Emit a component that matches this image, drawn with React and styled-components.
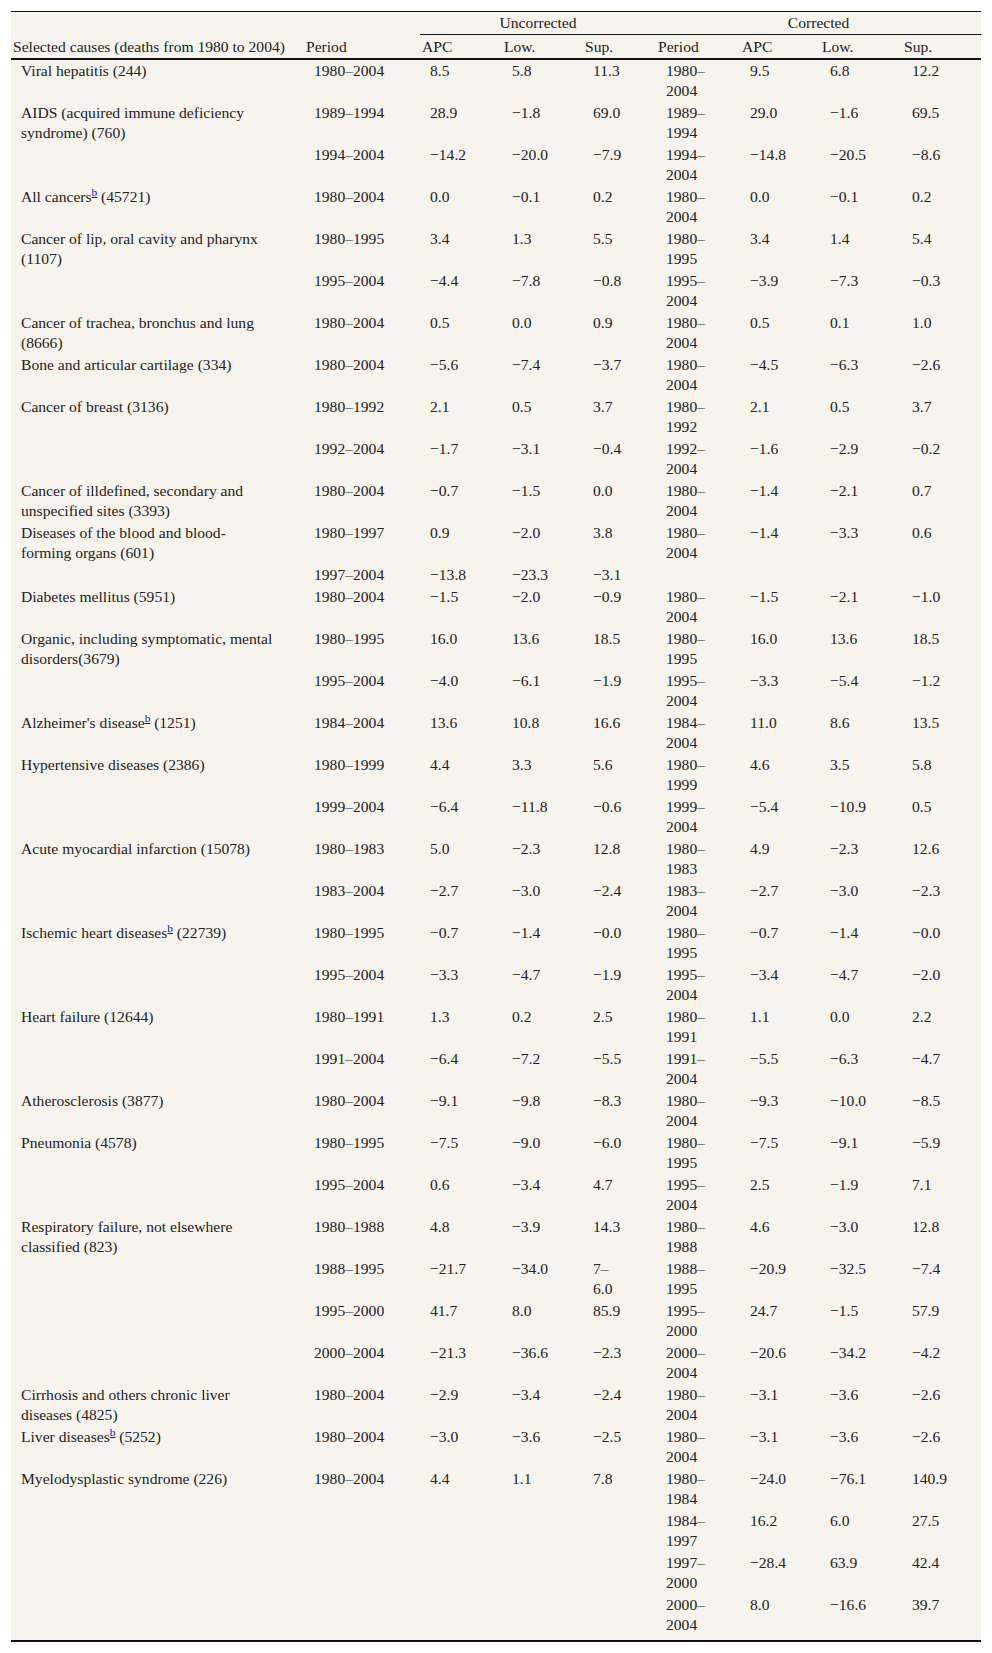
import React from "react";
import styled, { createGlobalStyle } from "styled-components";

const GlobalStyle = createGlobalStyle`
  body {
    margin: 0;
    background: #fff;
    color: #222;
    font-family: "Liberation Serif", "Times New Roman", serif;
  }
`;

const Page = styled.div`
  padding: 11px 11px 0;
`;
const Table = styled.table`
  width: 970px;
  table-layout: fixed;
  border-collapse: separate;
  border-spacing: 0;
  background: #f7f4ee;
  font-size: 15.6px;
  line-height: 20px;
  border-top: 1px solid #111;
  border-bottom: 2px solid #111;
`;
const Head = styled.th`
  padding: 2px 2px 1px;
  font-weight: normal;
  text-align: left;
  vertical-align: bottom;
  white-space: nowrap;
  border-bottom: 2px solid #111;
`;
const GroupHead = styled.th`
  padding: 1px 2px;
  font-weight: normal;
  text-align: center;
  border-bottom: 1px solid #111;
`;
const Row = styled.tr`
  &:last-child td {
    padding-bottom: 5px;
  }
`;
const Cell = styled.td`
  padding: 1px ${({ $wide }) => ($wide ? "29.5px" : "14px")} 1px 10px;
  vertical-align: top;
  white-space: pre-line;
`;
const Note = styled.a`
  color: #00e;
  text-decoration: underline;
  font-size: 0.72em;
  vertical-align: super;
  line-height: 0;
`;

const widths = [293, 116, 82, 81, 73, 84, 80, 82, 79];

const groups = [
  { cause: "Viral hepatitis (244)", rows: [["1980–2004", "8.5", "5.8", "11.3", "1980–2004", "9.5", "6.8", "12.2"]] },
  {
    cause: "AIDS (acquired immune deficiency syndrome) (760)",
    rows: [
      ["1989–1994", "28.9", "−1.8", "69.0", "1989–1994", "29.0", "−1.6", "69.5"],
      ["1994–2004", "−14.2", "−20.0", "−7.9", "1994–2004", "−14.8", "−20.5", "−8.6"]
    ]
  },
  { cause: "All cancers", note: "b", count: " (45721)", rows: [["1980–2004", "0.0", "−0.1", "0.2", "1980–2004", "0.0", "−0.1", "0.2"]] },
  {
    cause: "Cancer of lip, oral cavity and pharynx (1107)",
    rows: [
      ["1980–1995", "3.4", "1.3", "5.5", "1980–1995", "3.4", "1.4", "5.4"],
      ["1995–2004", "−4.4", "−7.8", "−0.8", "1995–2004", "−3.9", "−7.3", "−0.3"]
    ]
  },
  { cause: "Cancer of trachea, bronchus and lung (8666)", rows: [["1980–2004", "0.5", "0.0", "0.9", "1980–2004", "0.5", "0.1", "1.0"]] },
  { cause: "Bone and articular cartilage (334)", rows: [["1980–2004", "−5.6", "−7.4", "−3.7", "1980–2004", "−4.5", "−6.3", "−2.6"]] },
  {
    cause: "Cancer of breast (3136)",
    rows: [
      ["1980–1992", "2.1", "0.5", "3.7", "1980–1992", "2.1", "0.5", "3.7"],
      ["1992–2004", "−1.7", "−3.1", "−0.4", "1992–2004", "−1.6", "−2.9", "−0.2"]
    ]
  },
  {
    cause: "Cancer of illdefined, secondary and unspecified sites (3393)",
    rows: [["1980–2004", "−0.7", "−1.5", "0.0", "1980–2004", "−1.4", "−2.1", "0.7"]]
  },
  {
    cause: "Diseases of the blood and blood-forming organs (601)",
    rows: [
      ["1980–1997", "0.9", "−2.0", "3.8", "1980–2004", "−1.4", "−3.3", "0.6"],
      ["1997–2004", "−13.8", "−23.3", "−3.1", "", "", "", ""]
    ]
  },
  { cause: "Diabetes mellitus (5951)", rows: [["1980–2004", "−1.5", "−2.0", "−0.9", "1980–2004", "−1.5", "−2.1", "−1.0"]] },
  {
    cause: "Organic, including symptomatic, mental disorders(3679)",
    rows: [
      ["1980–1995", "16.0", "13.6", "18.5", "1980–1995", "16.0", "13.6", "18.5"],
      ["1995–2004", "−4.0", "−6.1", "−1.9", "1995–2004", "−3.3", "−5.4", "−1.2"]
    ]
  },
  { cause: "Alzheimer's disease", note: "b", count: " (1251)", rows: [["1984–2004", "13.6", "10.8", "16.6", "1984–2004", "11.0", "8.6", "13.5"]] },
  {
    cause: "Hypertensive diseases (2386)",
    rows: [
      ["1980–1999", "4.4", "3.3", "5.6", "1980–1999", "4.6", "3.5", "5.8"],
      ["1999–2004", "−6.4", "−11.8", "−0.6", "1999–2004", "−5.4", "−10.9", "0.5"]
    ]
  },
  {
    cause: "Acute myocardial infarction (15078)",
    rows: [
      ["1980–1983", "5.0", "−2.3", "12.8", "1980–1983", "4.9", "−2.3", "12.6"],
      ["1983–2004", "−2.7", "−3.0", "−2.4", "1983–2004", "−2.7", "−3.0", "−2.3"]
    ]
  },
  {
    cause: "Ischemic heart diseases",
    note: "b",
    count: " (22739)",
    rows: [
      ["1980–1995", "−0.7", "−1.4", "−0.0", "1980–1995", "−0.7", "−1.4", "−0.0"],
      ["1995–2004", "−3.3", "−4.7", "−1.9", "1995–2004", "−3.4", "−4.7", "−2.0"]
    ]
  },
  {
    cause: "Heart failure (12644)",
    rows: [
      ["1980–1991", "1.3", "0.2", "2.5", "1980–1991", "1.1", "0.0", "2.2"],
      ["1991–2004", "−6.4", "−7.2", "−5.5", "1991–2004", "−5.5", "−6.3", "−4.7"]
    ]
  },
  { cause: "Atherosclerosis (3877)", rows: [["1980–2004", "−9.1", "−9.8", "−8.3", "1980–2004", "−9.3", "−10.0", "−8.5"]] },
  {
    cause: "Pneumonia (4578)",
    rows: [
      ["1980–1995", "−7.5", "−9.0", "−6.0", "1980–1995", "−7.5", "−9.1", "−5.9"],
      ["1995–2004", "0.6", "−3.4", "4.7", "1995–2004", "2.5", "−1.9", "7.1"]
    ]
  },
  {
    cause: "Respiratory failure, not elsewhere classified (823)",
    rows: [
      ["1980–1988", "4.8", "−3.9", "14.3", "1980–1988", "4.6", "−3.0", "12.8"],
      ["1988–1995", "−21.7", "−34.0", "7–\n6.0", "1988–1995", "−20.9", "−32.5", "−7.4"],
      ["1995–2000", "41.7", "8.0", "85.9", "1995–2000", "24.7", "−1.5", "57.9"],
      ["2000–2004", "−21.3", "−36.6", "−2.3", "2000–2004", "−20.6", "−34.2", "−4.2"]
    ]
  },
  {
    cause: "Cirrhosis and others chronic liver diseases (4825)",
    rows: [["1980–2004", "−2.9", "−3.4", "−2.4", "1980–2004", "−3.1", "−3.6", "−2.6"]]
  },
  { cause: "Liver diseases", note: "b", count: " (5252)", rows: [["1980–2004", "−3.0", "−3.6", "−2.5", "1980–2004", "−3.1", "−3.6", "−2.6"]] },
  {
    cause: "Myelodysplastic syndrome (226)",
    rows: [
      ["1980–2004", "4.4", "1.1", "7.8", "1980–1984", "−24.0", "−76.1", "140.9"],
      ["", "", "", "", "1984–1997", "16.2", "6.0", "27.5"],
      ["", "", "", "", "1997–2000", "−28.4", "63.9", "42.4"],
      ["", "", "", "", "2000–2004", "8.0", "−16.6", "39.7"]
    ]
  }
];

const Cause = ({ group }) => (
  <>
    {group.cause}
    {group.note && <Note href="#">{group.note}</Note>}
    {group.count}
  </>
);

const App = () => (
  <Page>
    <GlobalStyle />
    <Table>
      <colgroup>
        {widths.map((w, i) => (
          <col key={i} style={{ width: w }} />
        ))}
      </colgroup>
      <thead>
        <tr>
          <Head rowSpan={2}>Selected causes (deaths from 1980 to 2004)</Head>
          <Head rowSpan={2}>Period</Head>
          <GroupHead colSpan={3}>Uncorrected</GroupHead>
          <GroupHead colSpan={4}>Corrected</GroupHead>
        </tr>
        <tr>
          <Head>APC</Head>
          <Head>Low.</Head>
          <Head>Sup.</Head>
          <Head>Period</Head>
          <Head>APC</Head>
          <Head>Low.</Head>
          <Head>Sup.</Head>
        </tr>
      </thead>
      <tbody>
        {groups.map(group =>
          group.rows.map((values, r) => (
            <Row key={group.cause + r}>
              <Cell $wide>{r === 0 && <Cause group={group} />}</Cell>
              {values.map((v, i) => (
                <Cell key={i}>{v}</Cell>
              ))}
            </Row>
          ))
        )}
      </tbody>
    </Table>
  </Page>
);

export default App;
